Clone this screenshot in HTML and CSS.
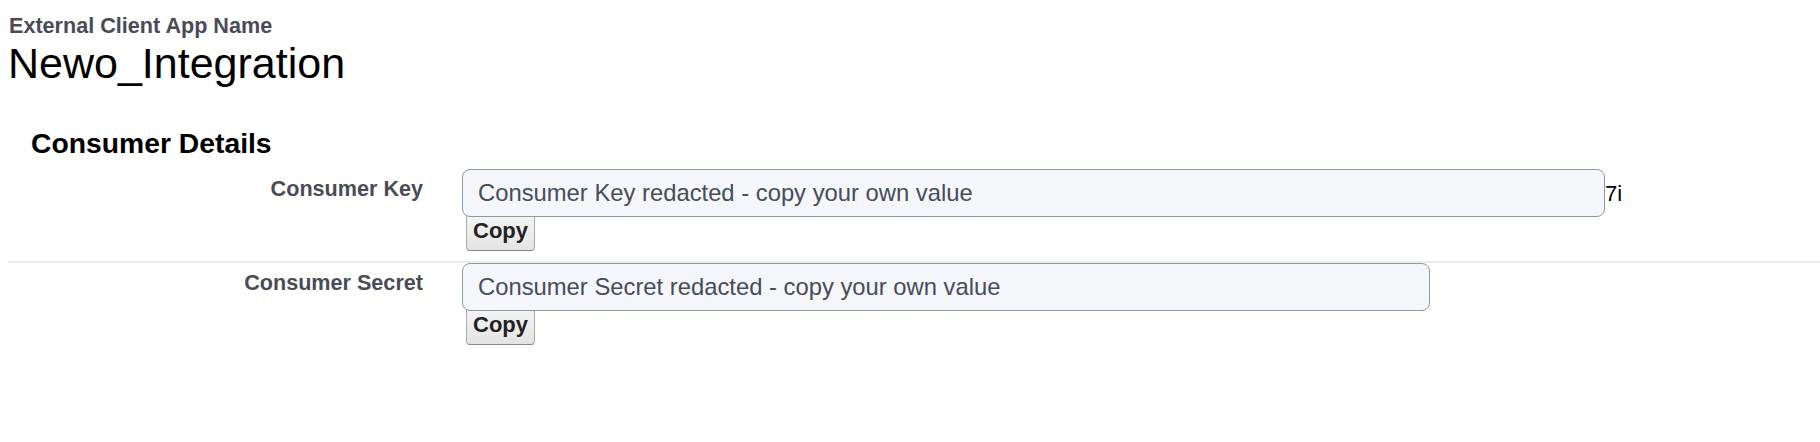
FILE: index.html
```html
<!DOCTYPE html>
<html lang="en">
<head>
<meta charset="utf-8">
<title>Newo_Integration</title>
<link rel="stylesheet" href="styles.css">
</head>
<body>
<div class="page-header">
  <div class="page-type">External Client App Name</div>
  <h1 class="page-name">Newo_Integration</h1>
</div>
<h2 class="section-title">Consumer Details</h2>
<div class="detail-list">
  <div class="detail-row">
    <div class="detail-label">Consumer Key</div>
    <div class="detail-value">
      <div class="value-line"><input class="value-input input-key" type="text" readonly value="Consumer Key redacted - copy your own value"><span class="overflow-text">7i</span></div>
      <button class="copy-btn" type="button">Copy</button>
    </div>
  </div>
  <div class="detail-row detail-row-sep">
    <div class="detail-label">Consumer Secret</div>
    <div class="detail-value">
      <div class="value-line"><input class="value-input input-secret" type="text" readonly value="Consumer Secret redacted - copy your own value"></div>
      <button class="copy-btn" type="button">Copy</button>
    </div>
  </div>
</div>
</body>
</html>
```

FILE: styles.css
```css
html, body {
  margin: 0;
  padding: 0;
  background: #ffffff;
}

body {
  font-family: "Liberation Sans", Arial, sans-serif;
  color: #000000;
  width: 1820px;
  height: 442px;
  overflow: hidden;
}

.page-header {
  padding: 13px 0 0 8px;
}

.page-type {
  padding-left: 1px;
  font-size: 21.6px;
  line-height: 26px;
  font-weight: bold;
  color: #4a4b57;
}

.page-name {
  margin: 0;
  font-size: 43px;
  line-height: 48px;
  font-weight: normal;
  color: #000000;
}

.section-title {
  margin: 40px 0 0 0;
  padding-left: 31px;
  font-size: 28.3px;
  line-height: 32px;
  font-weight: bold;
  color: #000000;
}

.detail-list {
  margin: 10px 0 0 8px;
}

.detail-row {
  display: grid;
  grid-template-columns: 415px 1fr;
  padding-bottom: 10px;
}

.detail-row-sep {
  border-top: 2px solid #ebebeb;
}

.detail-label {
  padding-top: 7px;
  font-size: 21.6px;
  line-height: 26px;
  font-weight: bold;
  color: #4a4b57;
  text-align: right;
}

.detail-value {
  padding-left: 39px;
}

.value-line {
  display: flex;
  align-items: baseline;
}

.value-input {
  position: relative;
  z-index: 1;
  box-sizing: border-box;
  height: 48px;
  margin: 0;
  padding: 0 15px;
  border: 1px solid #8e99a7;
  border-radius: 8px;
  background: #f4f6f9;
  font-family: "Liberation Sans", Arial, sans-serif;
  font-size: 23.8px;
  color: #464c5a;
  outline: none;
}

.input-key {
  width: 1143px;
}

.input-secret {
  width: 968px;
}

.overflow-text {
  font-size: 22px;
  color: #000000;
}

.copy-btn {
  display: block;
  box-sizing: border-box;
  width: 69px;
  height: 41px;
  margin: -7px 0 0 4px;
  padding: 0;
  border: 1px solid #a8a8a8;
  border-bottom-color: #888888;
  border-radius: 4px;
  background: linear-gradient(#f6f6f6, #e4e4e4);
  font-family: "Liberation Sans", Arial, sans-serif;
  font-size: 22px;
  font-weight: bold;
  color: #222222;
}
```
